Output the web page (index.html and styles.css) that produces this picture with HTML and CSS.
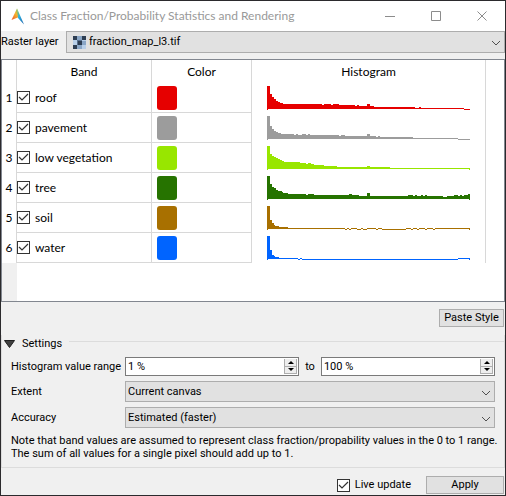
FILE: index.html
```
<!DOCTYPE html>
<html lang="en">
<head>
<meta charset="utf-8">
<meta name="viewport" content="width=device-width, initial-scale=1">
<title>Class Fraction/Probability Statistics and Rendering</title>
<link rel="stylesheet" href="styles.css">
</head>
<body>
<main class="window">
  <header class="titlebar">
    <svg class="logo" viewBox="0 0 14 17" aria-hidden="true">
      <defs>
        <linearGradient id="warm" x1="0.8" y1="0" x2="0.1" y2="1"><stop offset="0" stop-color="#7dbb5c"/><stop offset="0.4" stop-color="#f6b52e"/><stop offset="1" stop-color="#ef5a28"/></linearGradient>
        <linearGradient id="cool" x1="0" y1="0" x2="0.6" y2="1"><stop offset="0" stop-color="#9cc63f"/><stop offset="0.5" stop-color="#2fb0e0"/><stop offset="1" stop-color="#1c6fb4"/></linearGradient>
      </defs>
      <path d="M6 0.5 8 9 0.5 12Z" fill="url(#warm)"/>
      <path d="M6 0.5 13 16.5 7 10Z" fill="url(#cool)"/>
    </svg>
    <h1 class="title">Class Fraction/Probability Statistics and Rendering</h1>
    <div class="window-buttons">
      <button class="window-button" aria-label="Minimize"><svg viewBox="0 0 12 12"><path d="M1 6.5h10"/></svg></button>
      <button class="window-button" aria-label="Maximize"><svg viewBox="0 0 12 12"><path d="M1.500 1.500h9v9h-9z"/></svg></button>
      <button class="window-button" aria-label="Close"><svg viewBox="0 0 12 12"><path d="M1.500 1.500l9 9M10.500 1.500l-9 9"/></svg></button>
    </div>
  </header>

  <div class="layer-row">
    <label for="layer">Raster layer</label>
    <div class="combo layer-combo">
      <svg class="raster-icon" viewBox="0 0 13 13" shape-rendering="crispEdges" aria-hidden="true">
        <path fill="#b8cfe8" d="M0 0h13v13H0z"/>
        <path fill="#2d3d52" d="M0 0h4v4H0zM9 0h4v4H9zM5 5h4v4H5zM0 9h4v4H0z"/>
        <path fill="#8aa6c6" d="M4 0h5v4H4zM9 5h4v4H9zM4 9h5v4H4z"/>
        <path fill="#58708e" d="M4 4h1v5H4zM5 4h4v1H5z"/>
      </svg>
      <select id="layer"><option>fraction_map_l3.tif</option></select>
      <svg class="chevron" viewBox="0 0 10 6" aria-hidden="true"><path d="M1 1l4 4 4-4"/></svg>
    </div>
  </div>

  <div class="table-frame">
    <table class="bands">
      <colgroup><col class="col-number"><col class="col-band"><col class="col-color"><col class="col-histogram"></colgroup>
      <thead><tr><td></td><th scope="col">Band</th><th scope="col">Color</th><th scope="col">Histogram</th></tr></thead>
      <tbody id="rows"></tbody>
    </table>
    <div class="number-gutter"></div>
  </div>

  <div class="paste-row"><button class="button">Paste Style</button></div>

  <section class="settings">
    <h2 class="settings-heading"><button class="disclosure" aria-expanded="true"><svg viewBox="0 0 11 8" aria-hidden="true"><path d="M0.500 0.500h10L5.500 7.500z"/></svg>Settings</button></h2>
    <div class="settings-grid">
      <label for="low">Histogram value range</label>
      <div class="range">
        <div class="spin"><input id="low" value="1 %"><span class="steppers"><button class="step up" aria-label="Increase minimum"></button><button class="step down" aria-label="Decrease minimum"></button></span></div>
        <label for="high">to</label>
        <div class="spin"><input id="high" value="100 %"><span class="steppers"><button class="step up" aria-label="Increase maximum"></button><button class="step down" aria-label="Decrease maximum"></button></span></div>
      </div>
      <label for="extent">Extent</label>
      <div class="combo"><select id="extent"><option>Current canvas</option></select><svg class="chevron" viewBox="0 0 10 6" aria-hidden="true"><path d="M1 1l4 4 4-4"/></svg></div>
      <label for="accuracy">Accuracy</label>
      <div class="combo"><select id="accuracy"><option>Estimated (faster)</option></select><svg class="chevron" viewBox="0 0 10 6" aria-hidden="true"><path d="M1 1l4 4 4-4"/></svg></div>
    </div>
    <p class="note">Note that band values are assumed to represent class fraction/propability values in the 0 to 1 range.<br>The sum of all values for a single pixel should add up to 1.</p>
  </section>

  <footer class="actions">
    <label class="check"><input type="checkbox" checked>Live update</label>
    <button class="button apply">Apply</button>
  </footer>
</main>
<script src="bands.js"></script>
</body>
</html>
```
FILE: styles.css
```
* { box-sizing: border-box; }
body {
  margin: 0;
  background: #f0f0f0;
  color: #000;
  font: 11px/16px Roboto, sans-serif;
}
button, input, select { font: inherit; color: inherit; }
.window {
  display: flex;
  flex-direction: column;
  min-height: 100vh;
  border: 1px solid #2b2a2d;
}
.titlebar {
  display: flex;
  align-items: center;
  height: 30px;
  padding-left: 10px;
  background: #fff;
}
.logo { width: 14px; height: 17px; margin-right: 5px; }
.title {
  flex: 1;
  margin: 0;
  color: #999;
  font: 12px/16px Lato, sans-serif;
  white-space: nowrap;
}
.window-buttons { display: flex; }
.window-button {
  display: grid;
  place-items: center;
  width: 46px;
  height: 28px;
  padding: 0;
  border: 0;
  background: none;
}
.window-button svg { width: 12px; height: 12px; fill: none; stroke: #8c8c8c; }
.layer-row { display: flex; align-items: center; }
.layer-row label { width: 65px; white-space: nowrap; }
.combo { position: relative; flex: 1; min-width: 0; }
.combo select {
  display: block;
  width: 100%;
  height: 21px;
  padding: 0 20px 0 2px;
  border: 1px solid #adadad;
  border-radius: 0;
  background: #e1e1e1;
  appearance: none;
}
.layer-combo select { height: 22px; padding-left: 22px; }
.chevron {
  position: absolute;
  top: 50%;
  right: 4px;
  width: 10px;
  height: 6px;
  margin-top: -2px;
  fill: none;
  stroke: #505050;
  pointer-events: none;
}
.raster-icon { position: absolute; top: 5px; left: 7px; width: 13px; height: 13px; }
.table-frame {
  display: flex;
  flex: 1;
  flex-direction: column;
  margin-top: 6px;
  border: 1px solid #828790;
  background: #fff;
}
.bands {
  width: calc(100% - 18px);
  border-collapse: separate;
  border-spacing: 0;
  table-layout: fixed;
  font: 12px/16px Lato, sans-serif;
}
.col-number { width: 15px; }
.col-band { width: 135px; }
.col-color { width: 100px; }
.bands th, .bands td { padding: 0; border-right: 1px solid #d8d8d8; font-weight: 400; }
.bands thead { height: 23px; }
.bands tbody tr { height: 30px; }
.bands tbody .number { text-align: center; }
.bands tbody .band, .bands tbody .color { border-bottom: 1px solid #d8d8d8; }
.check { display: flex; align-items: center; gap: 5px; }
.check input {
  width: 13px;
  height: 13px;
  margin: 0;
  border: 1px solid #333;
  background: #fff;
  appearance: none;
}
.check input:checked {
  background: #fff url("data:image/svg+xml,%3Csvg xmlns='http://www.w3.org/2000/svg' viewBox='0 0 11 11'%3E%3Cpath d='M1 5l3 3 6-6' fill='none' stroke='%23333' stroke-width='1.200'/%3E%3C/svg%3E") center / 11px 11px;
}
.swatch {
  display: block;
  width: 20px;
  height: 24px;
  margin-left: 5px;
  padding: 0;
  border: 0;
  border-radius: 3px;
}
.histogram { display: block; width: calc(100% - 30px); height: 25px; margin-left: 15px; }
.number-gutter { flex: 1; width: 15px; background: #f0f0f0; }
.paste-row { display: flex; justify-content: flex-end; padding: 7px 1px 0; }
.button {
  height: 18px;
  padding: 0 3px;
  border: 1px solid #adadad;
  background: #e1e1e1;
  line-height: 16px;
}
.paste-row .button { min-width: 65px; }
.settings { margin-top: 8px; border: 1px solid #dcdcdc; border-width: 0 1px 1px; padding: 0 9px 7px; }
.settings-heading {
  display: flex;
  align-items: center;
  gap: 7px;
  height: 17px;
  margin: 0 -9px;
  font: inherit;
}
.settings-heading::after { content: ""; flex: 1; height: 1px; margin-bottom: 5px; background: #dcdcdc; }
.disclosure {
  display: flex;
  align-items: center;
  gap: 7px;
  padding: 0 0 0 2px;
  border: 0;
  background: none;
}
.disclosure svg { width: 11px; height: 8px; fill: #404040; stroke: #202020; }
.settings-grid {
  display: grid;
  grid-template-columns: 108px 1fr;
  row-gap: 5px;
  column-gap: 6px;
  align-items: center;
  margin-top: 5px;
}
.settings-grid label { white-space: nowrap; }
.range { display: flex; align-items: center; gap: 6px; }
.spin { display: flex; flex: 1; min-width: 0; height: 19px; border: 1px solid #7a7a7a; background: #fff; }
.spin input { flex: 1; width: 0; min-width: 0; padding: 0 2px; border: 0; background: none; }
.steppers { display: flex; flex-direction: column; width: 15px; padding: 1px; }
.step {
  display: grid;
  place-items: center;
  flex: 1;
  padding: 0;
  border: 1px solid #adadad;
  border-top-width: 0;
  background: #eee;
}
.step::before { content: ""; border: 3px solid transparent; }
.up::before { border-top: 0; border-bottom-color: #000; }
.down::before { border-bottom: 0; border-top-color: #000; }
.note { margin: 6px -9px 0 0; line-height: 13px; }
.actions { display: flex; align-items: center; justify-content: flex-end; gap: 15px; padding: 8px 1px 1px; }
.apply { width: 78px; }
```
FILE: bands.js
```
// Each profile lists [first column, height] runs; columns are 0-202.
const bands = [
  ['roof', '#e60000', [[0,23],[3,15],[5,12],[7,10],[9,8],[11,7],[13,6],[16,5],[55,4],[57,5],[64,4],[66,5],[72,4],[88,3],[90,4],[92,3],[100,5],[103,3],[107,2],[148,1],[152,2],[154,1]], 197],
  ['pavement', '#9c9c9c', [[0,23],[3,13],[5,10],[7,8],[9,7],[11,6],[14,5],[27,4],[29,5],[31,4],[35,5],[39,4],[41,5],[43,4],[72,3],[74,4],[78,3],[100,5],[103,3],[109,2],[111,3],[113,2],[146,1]], 191],
  ['low vegetation', '#98e600', [[0,23],[3,15],[5,13],[7,12],[9,11],[11,10],[13,9],[15,8],[17,7],[33,6],[39,5],[41,6],[44,5],[47,4],[57,3],[70,2],[100,3],[103,2],[123,1]], 203],
  ['tree', '#267300', [[0,23],[3,15],[5,12],[7,11],[9,9],[11,8],[15,7],[16,6],[21,5],[39,4],[41,5],[47,4],[82,5],[85,4],[92,3],[100,6],[103,3],[141,4],[146,3],[148,4],[150,3],[154,4],[156,3],[158,4],[160,3],[176,2],[180,3],[187,4],[191,3],[193,4],[195,3],[197,4],[201,5]], 203],
  ['soil', '#a87000', [[0,23],[3,9],[5,6],[7,4],[8,3],[12,2],[21,1],[78,0],[80,1],[82,0],[84,1],[90,0],[94,1],[96,0],[100,1],[109,0],[111,1],[115,0],[139,1],[144,0],[146,1],[150,0],[152,1],[158,0],[160,1],[166,0],[168,1]], 203],
  ['water', '#0064ff', [[0,23],[3,9],[5,4],[7,3],[8,2],[12,1],[31,0],[33,1],[35,0],[191,1]], 203]
];

function histogramPath(runs, baseEnd) {
  let path = 'M0 23h1v1H0zM202 23h1v1h-1z';
  runs.forEach(([start, height], i) => {
    const end = i + 1 < runs.length ? runs[i + 1][0] : baseEnd;
    path += `M${start} ${23 - height}H${end}V${height ? 23 : 24}H${start}z`;
  });
  if (baseEnd < 203) path += `M${baseEnd} 23H203V24H${baseEnd}z`;
  return path;
}

document.getElementById('rows').innerHTML = bands.map(([name, color, runs, end], i) => `
  <tr>
    <td class="number">${i + 1}</td>
    <td class="band"><label class="check"><input type="checkbox" checked>${name}</label></td>
    <td class="color"><button class="swatch" style="background:${color}" aria-label="${name} color"></button></td>
    <td><svg class="histogram" viewBox="0 0 203 25" preserveAspectRatio="none" shape-rendering="crispEdges" role="img" aria-label="${name} histogram"><path fill="${color}" d="${histogramPath(runs, end)}"/></svg></td>
  </tr>`).join('');
```
